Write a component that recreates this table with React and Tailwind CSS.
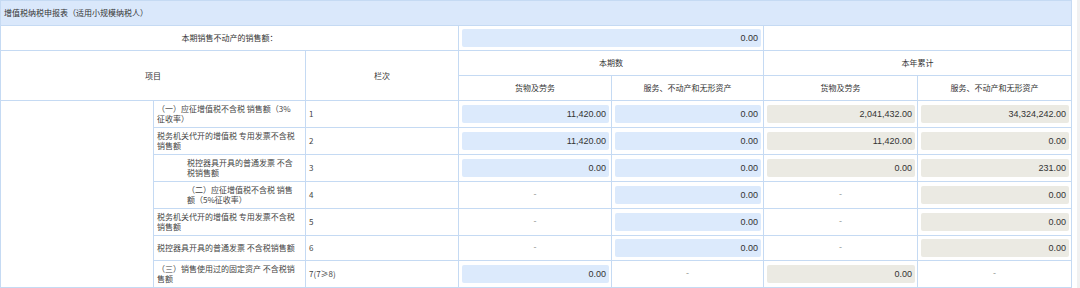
const cjk = '"Noto Sans CJK SC", "Noto Sans", sans-serif';
const num = '"Liberation Sans", Arial, sans-serif';

const rows = [
    {
        lines: ['（一）应征增值税不含税 销售额（3%', '征收率）'],
        no: '1',
        vals: [['b', '11,420.00'], ['b', '0.00'], ['g', '2,041,432.00'], ['g', '34,324,242.00']],
    },
    {
        lines: ['税务机关代开的增值税 专用发票不含税', '销售额'],
        no: '2',
        vals: [['b', '11,420.00'], ['b', '0.00'], ['g', '11,420.00'], ['g', '0.00']],
    },
    {
        lines: ['税控器具开具的普通发票 不含', '税销售额'],
        indent: true,
        no: '3',
        vals: [['b', '0.00'], ['b', '0.00'], ['g', '0.00'], ['g', '231.00']],
    },
    {
        lines: ['（二）应征增值税不含税 销售', '额（5%征收率）'],
        indent: true,
        no: '4',
        vals: [['-'], ['b', '0.00'], ['-'], ['g', '0.00']],
    },
    {
        lines: ['税务机关代开的增值税 专用发票不含税', '销售额'],
        no: '5',
        vals: [['-'], ['b', '0.00'], ['-'], ['g', '0.00']],
    },
    {
        lines: ['税控器具开具的普通发票 不含税销售额'],
        no: '6',
        short: true,
        vals: [['-'], ['b', '0.00'], ['-'], ['g', '0.00']],
    },
    {
        lines: ['（三）销售使用过的固定资产 不含税销', '售额'],
        no: '7(7≥8)',
        vals: [['b', '0.00'], ['-'], ['g', '0.00'], ['-']],
    },
];

function Box({ kind, value }) {
    if (kind === '-') {
        return <div className="text-center text-[9px] text-[#999]" style={{ fontFamily: num }}>-</div>;
    }
    return (
        <div
            className={`ml-[3px] mr-[2px] h-[18px] rounded-[2px] pr-[3px] text-right text-[9px] leading-[18px] text-[#333] ${
                kind === 'b' ? 'bg-[#dceafc]' : 'bg-[#ebeae3]'
            }`}
            style={{ fontFamily: num }}
        >
            {value}
        </div>
    );
}

const cell = 'border border-[#c5daf3] p-0';

export default function App() {
    return (
        <div className="flex h-[288px] w-[1080px] overflow-hidden bg-white text-[8px] text-[#333]" style={{ fontFamily: cjk }}>
            <table className="w-[1071px] table-fixed border-collapse self-start">
                <colgroup>
                    <col className="w-[153px]" />
                    <col className="w-[152px]" />
                    <col className="w-[153px]" />
                    <col className="w-[153px]" />
                    <col className="w-[152px]" />
                    <col className="w-[154px]" />
                    <col className="w-[154px]" />
                </colgroup>
                <tbody>
                    {/* title */}
                    <tr className="h-[25px]">
                        <td colSpan={7} className={`${cell} bg-[#dae8fb] pl-[3px] text-left`}>
                            增值税纳税申报表（适用小规模纳税人）
                        </td>
                    </tr>
                    <tr className="h-[25px]">
                        <td colSpan={3} className={`${cell} text-center`}>本期销售不动产的销售额：</td>
                        <td colSpan={2} className={cell}>
                            <Box kind="b" value="0.00" />
                        </td>
                        <td colSpan={2} className={cell} />
                    </tr>
                    <tr className="h-[25px]">
                        <td colSpan={2} rowSpan={2} className={`${cell} text-center`}>项目</td>
                        <td rowSpan={2} className={`${cell} text-center`}>栏次</td>
                        <td colSpan={2} className={`${cell} text-center`}>本期数</td>
                        <td colSpan={2} className={`${cell} text-center`}>本年累计</td>
                    </tr>
                    <tr className="h-[25px]">
                        <td className={`${cell} text-center`}>货物及劳务</td>
                        <td className={`${cell} text-center`}>服务、不动产和无形资产</td>
                        <td className={`${cell} text-center`}>货物及劳务</td>
                        <td className={`${cell} text-center`}>服务、不动产和无形资产</td>
                    </tr>

                    {/* data rows */}
                    {rows.map((r, i) => (
                        <tr key={r.no} className={r.short ? 'h-[25px]' : 'h-[27px]'}>
                            {i === 0 && <td rowSpan={rows.length} className={cell} />}
                            <td
                                className={`${cell} whitespace-nowrap text-left leading-[10px] text-[#444] ${
                                    r.indent ? 'pl-[33px]' : 'pl-[3px]'
                                }`}
                            >
                                {r.lines.map((l, j) => (
                                    <div key={j}>{l}</div>
                                ))}
                            </td>
                            <td className={`${cell} pl-[3px] text-left text-[#444]`}>{r.no}</td>
                            {r.vals.map(([kind, value], j) => (
                                <td key={j} className={cell}>
                                    <Box kind={kind} value={value} />
                                </td>
                            ))}
                        </tr>
                    ))}
                </tbody>
            </table>
            <div className="ml-auto h-full w-[3px] bg-[#f1f1f1]" />
        </div>
    );
}
